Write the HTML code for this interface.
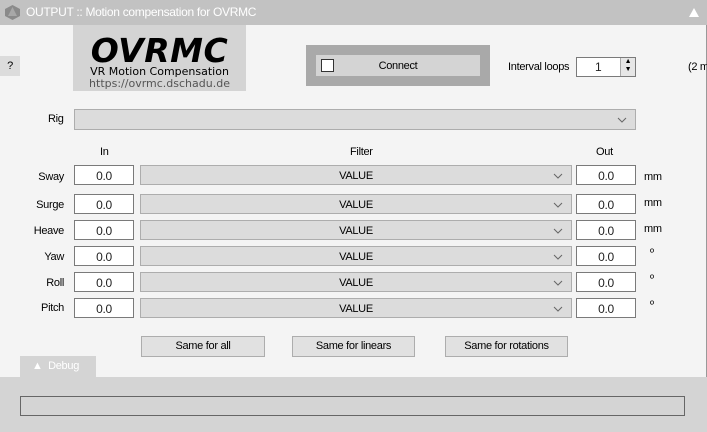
<!DOCTYPE html><html><head><style>
*{box-sizing:border-box;margin:0;padding:0}
body{width:707px;height:432px;overflow:hidden;background:#f4f4f4;font-family:"Liberation Sans",Arial,sans-serif;font-size:11px;color:#000;position:relative;letter-spacing:-0.3px}
.a{position:absolute;white-space:nowrap}
.tb{left:0;top:0;width:707px;height:25px;background:#c2c2c2;color:#fff;font-size:12px}
.in{background:#fff;border:1px solid #7a7a7a;text-align:center;line-height:20px;font-size:12px;color:#222}
.cb{background:#dcdcdc;border:1px solid #adadad;text-align:center;line-height:20px;font-size:11px}
.cb svg{position:absolute;right:8px;top:7px}
.lb{text-align:right;width:60px;left:4px}
.bt{background:#e1e1e1;border:1px solid #adadad;text-align:center;line-height:19px;height:21px}
</style></head><body>
<div class="a tb"><svg class="a" style="left:5px;top:5px" width="15" height="15"><polygon points="7.5,0 15,4 15,11 7.5,15 0,11 0,4" fill="#8a8a8a"/><polygon points="7.5,2 12,11 3,11" fill="#a8a8a8"/></svg><span class="a" style="left:26px;top:5px">OUTPUT :: Motion compensation for OVRMC</span><svg class="a" style="left:689px;top:8px" width="10" height="9"><polygon points="5,0 10,9 0,9" fill="#fff"/></svg></div>
<div class="a" style="right:0;top:25px;width:1px;height:352px;background:#999"></div>
<div class="a" style="left:0;top:56px;width:20px;height:20px;background:#dcdcdc;text-align:center;line-height:20px">?</div>
<div class="a" style="left:73px;top:25px;width:173px;height:66px;background:#d4d4d4;text-align:center">
<div style="font-family:'DejaVu Sans',sans-serif;font-weight:bold;font-style:italic;font-size:33px;line-height:30px;margin-top:11px;letter-spacing:0.5px">OVRMC</div>
<div style="font-family:'DejaVu Sans',sans-serif;font-size:11px;line-height:12px;letter-spacing:0">VR Motion Compensation</div>
<div style="font-family:'DejaVu Sans',sans-serif;font-size:11px;line-height:12px;color:#555;letter-spacing:0">https://ovrmc.dschadu.de</div></div>
<div class="a" style="left:306px;top:45px;width:184px;height:41px;background:#a9a9a9"></div>
<div class="a" style="left:316px;top:55px;width:164px;height:21px;background:#d4d4d4;text-align:center;line-height:22px">Connect</div>
<div class="a" style="left:321px;top:59px;width:13px;height:13px;background:#fff;border:1px solid #333"></div>
<div class="a" style="left:508px;top:61px">Interval loops</div>
<div class="a in" style="left:576px;top:57px;width:60px;height:20px;text-align:left;padding-left:18px;line-height:19px">1</div>
<div class="a" style="left:620px;top:58px;width:15px;height:18px;background:#e6e6e6;border-left:1px solid #aaa;font-size:7px;line-height:8px;text-align:center">▲<br>▼</div>
<div class="a" style="left:688px;top:61px">(2 m</div>
<div class="a" style="left:48px;top:113px">Rig</div>
<div class="a cb" style="left:74px;top:109px;width:562px;height:21px"><svg width="10" height="6"><path d="M1 1L5 5L9 1" fill="none" stroke="#666"/></svg></div>
<div class="a" style="left:100px;top:146px">In</div>
<div class="a" style="left:350px;top:146px">Filter</div>
<div class="a" style="left:596px;top:146px">Out</div>
<div class="a lb" style="top:171px">Sway</div><div class="a in" style="left:74px;top:165px;width:60px;height:20px">0.0</div><div class="a cb" style="left:140px;top:165px;width:432px;height:20px">VALUE<svg width="10" height="6"><path d="M1 1L5 5L9 1" fill="none" stroke="#666"/></svg></div><div class="a in" style="left:576px;top:165px;width:60px;height:20px">0.0</div><div class="a" style="left:644px;top:171px">mm</div>
<div class="a lb" style="top:199px">Surge</div><div class="a in" style="left:74px;top:194px;width:60px;height:20px">0.0</div><div class="a cb" style="left:140px;top:194px;width:432px;height:20px">VALUE<svg width="10" height="6"><path d="M1 1L5 5L9 1" fill="none" stroke="#666"/></svg></div><div class="a in" style="left:576px;top:194px;width:60px;height:20px">0.0</div><div class="a" style="left:644px;top:197px">mm</div>
<div class="a lb" style="top:225px">Heave</div><div class="a in" style="left:74px;top:220px;width:60px;height:20px">0.0</div><div class="a cb" style="left:140px;top:220px;width:432px;height:20px">VALUE<svg width="10" height="6"><path d="M1 1L5 5L9 1" fill="none" stroke="#666"/></svg></div><div class="a in" style="left:576px;top:220px;width:60px;height:20px">0.0</div><div class="a" style="left:644px;top:223px">mm</div>
<div class="a lb" style="top:251px">Yaw</div><div class="a in" style="left:74px;top:246px;width:60px;height:20px">0.0</div><div class="a cb" style="left:140px;top:246px;width:432px;height:20px">VALUE<svg width="10" height="6"><path d="M1 1L5 5L9 1" fill="none" stroke="#666"/></svg></div><div class="a in" style="left:576px;top:246px;width:60px;height:20px">0.0</div><div class="a" style="left:650px;top:247px">º</div>
<div class="a lb" style="top:277px">Roll</div><div class="a in" style="left:74px;top:272px;width:60px;height:20px">0.0</div><div class="a cb" style="left:140px;top:272px;width:432px;height:20px">VALUE<svg width="10" height="6"><path d="M1 1L5 5L9 1" fill="none" stroke="#666"/></svg></div><div class="a in" style="left:576px;top:272px;width:60px;height:20px">0.0</div><div class="a" style="left:650px;top:273px">º</div>
<div class="a lb" style="top:302px">Pitch</div><div class="a in" style="left:74px;top:298px;width:60px;height:20px">0.0</div><div class="a cb" style="left:140px;top:298px;width:432px;height:20px">VALUE<svg width="10" height="6"><path d="M1 1L5 5L9 1" fill="none" stroke="#666"/></svg></div><div class="a in" style="left:576px;top:298px;width:60px;height:20px">0.0</div><div class="a" style="left:650px;top:299px">º</div>
<div class="a bt" style="left:141px;top:336px;width:124px">Same for all</div>
<div class="a bt" style="left:292px;top:336px;width:123px">Same for linears</div>
<div class="a bt" style="left:445px;top:336px;width:123px">Same for rotations</div>
<div class="a" style="left:0;top:377px;width:707px;height:55px;background:#d4d4d4"></div>
<div class="a" style="left:20px;top:356px;width:76px;height:21px;background:#d4d4d4;color:#fff;line-height:21px;padding-left:12px">▲&nbsp; Debug</div>
<div class="a" style="left:20px;top:396px;width:665px;height:20px;border:1px solid #666"></div>
</body></html>
